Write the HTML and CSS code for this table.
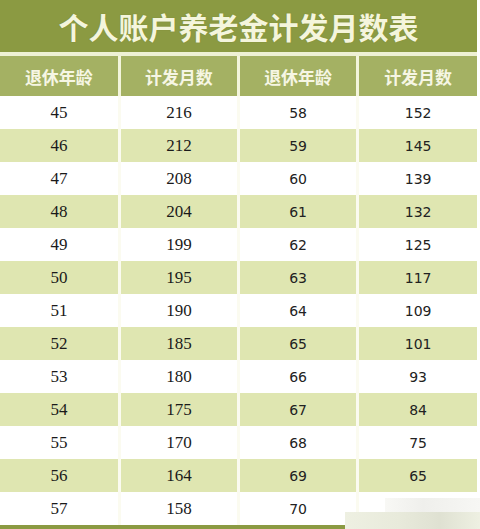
FILE: index.html
```html
<!DOCTYPE html>
<html lang="zh">
<head>
<meta charset="utf-8">
<link rel="stylesheet" href="styles.css">
</head>
<body>
<div class="sheet">
  <div class="title">个人账户养老金计发月数表</div>
  <div class="band"></div>
  <table class="grid">
    <thead>
      <tr><th>退休年龄</th><th>计发月数</th><th>退休年龄</th><th class="last">计发月数</th></tr>
    </thead>
    <tbody>
      <tr><td>45</td><td>216</td><td class="r">58</td><td class="r last">152</td></tr>
      <tr class="alt"><td>46</td><td>212</td><td class="r">59</td><td class="r last">145</td></tr>
      <tr><td>47</td><td>208</td><td class="r">60</td><td class="r last">139</td></tr>
      <tr class="alt"><td>48</td><td>204</td><td class="r">61</td><td class="r last">132</td></tr>
      <tr><td>49</td><td>199</td><td class="r">62</td><td class="r last">125</td></tr>
      <tr class="alt"><td>50</td><td>195</td><td class="r">63</td><td class="r last">117</td></tr>
      <tr><td>51</td><td>190</td><td class="r">64</td><td class="r last">109</td></tr>
      <tr class="alt"><td>52</td><td>185</td><td class="r">65</td><td class="r last">101</td></tr>
      <tr><td>53</td><td>180</td><td class="r">66</td><td class="r last">93</td></tr>
      <tr class="alt"><td>54</td><td>175</td><td class="r">67</td><td class="r last">84</td></tr>
      <tr><td>55</td><td>170</td><td class="r">68</td><td class="r last">75</td></tr>
      <tr class="alt"><td>56</td><td>164</td><td class="r">69</td><td class="r last">65</td></tr>
      <tr><td>57</td><td>158</td><td class="r">70</td><td class="r last"></td></tr>
    </tbody>
  </table>
  <div class="foot"><div class="foot-bar"></div><div class="foot-mark"></div></div>
  <div class="watermark"></div>
</div>
</body>
</html>
```
FILE: styles.css
```css
html, body {
  margin: 0;
  padding: 0;
  background: #ffffff;
}
.sheet {
  position: relative;
  width: 480px;
  height: 529px;
  overflow: hidden;
  background: #ffffff;
}
.title {
  width: 477px;
  height: 52px;
  background: #8b9a42;
  color: #f4f5dc;
  font-family: "Noto Sans CJK SC", sans-serif;
  font-weight: 700;
  font-size: 30px;
  line-height: 52px;
  text-align: center;
  text-shadow: 0 0 1px #6f7d30;
}
.band {
  width: 477px;
  height: 4px;
  background: #eef1d4;
}
.grid {
  width: 477px;
  border-collapse: collapse;
  table-layout: fixed;
}
.grid th {
  height: 40px;
  padding: 0;
  background: #a4b163;
  color: #f6f6e4;
  font-family: "Noto Sans CJK SC", sans-serif;
  font-weight: 700;
  font-size: 17px;
  border-right: 3px solid #f3f5dc;
  text-align: center;
}
.grid td {
  height: 33px;
  padding: 0;
  text-align: center;
  font-family: "Liberation Serif", serif;
  font-size: 17px;
  color: #1a1a1a;
  border-right: 3px solid #fbfbf0;
}
.grid td.r {
  font-family: "DejaVu Sans", sans-serif;
  font-size: 14px;
  color: #222222;
}
.grid .last {
  border-right: none;
}
.grid tr.alt td {
  background: #dfe6b1;
}
.foot {
  display: flex;
  height: 4px;
}
.foot-bar {
  width: 345px;
  height: 4px;
  background: #8b9a42;
}
.foot-mark {
  flex: 1;
  height: 4px;
  background: #e4e6d6;
}
.watermark {
  position: absolute;
  left: 345px;
  bottom: 0;
  width: 135px;
  height: 17px;
  background: linear-gradient(90deg, #eef0e2 0%, #e8eadb 40%, #dfe1d2 70%, #eef0e2 100%);
}
.watermark::before {
  content: "";
  position: absolute;
  left: 40px;
  top: -14px;
  width: 95px;
  height: 14px;
  background: linear-gradient(90deg, #f8f8f5 0%, #efefec 40%, #f7f7f4 100%);
}
```
